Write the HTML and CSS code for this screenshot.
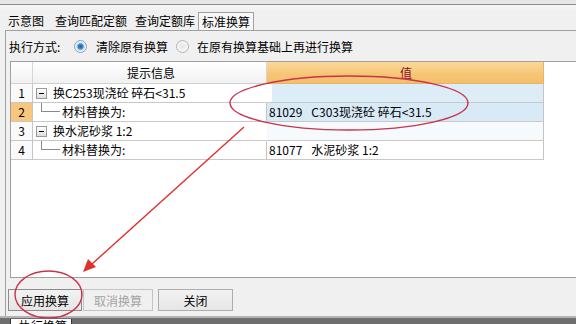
FILE: index.html
```html
<!DOCTYPE html>
<html lang="zh-CN">
<head>
    <meta charset="utf-8" />
    <title>标准换算</title>
    <link rel="stylesheet" href="styles.css">
</head>
<body>
    <div class="top-strip"></div>

    <div class="tabs">
        <div class="tab tab-1">示意图</div>
        <div class="tab tab-2">查询匹配定额</div>
        <div class="tab tab-3">查询定额库</div>
        <div class="tab tab-active">标准换算</div>
    </div>

    <div class="panel">
        <div class="options">
            <span class="opt-label">执行方式:</span>
            <span class="radio radio-on"></span>
            <span class="radio-text">清除原有换算</span>
            <span class="radio"></span>
            <span class="radio-text">在原有换算基础上再进行换算</span>
        </div>

        <div class="grid">
            <div class="row head">
                <div class="cell num"></div>
                <div class="cell info">提示信息</div>
                <div class="cell value">值</div>
            </div>

            <div class="row group">
                <div class="cell num">1</div>
                <div class="cell info"><span class="toggle"></span>换C253现浇砼 碎石&lt;31.5</div>
                <div class="cell value"><div class="fill"></div></div>
            </div>

            <div class="row child selected">
                <div class="cell num">2</div>
                <div class="cell info"><span class="elbow"></span>材料替换为:</div>
                <div class="cell value"><span class="code">81029</span>C303现浇砼 碎石&lt;31.5</div>
            </div>

            <div class="row group group-light">
                <div class="cell num">3</div>
                <div class="cell info"><span class="toggle"></span>换水泥砂浆 1:2</div>
                <div class="cell value"></div>
            </div>

            <div class="row child">
                <div class="cell num">4</div>
                <div class="cell info"><span class="elbow"></span>材料替换为:</div>
                <div class="cell value"><span class="code">81077</span>水泥砂浆 1:2</div>
            </div>
        </div>

        <div class="actions">
            <button class="button button-default">应用换算</button>
            <button class="button button-off">取消换算</button>
            <button class="button button-close">关闭</button>
        </div>
    </div>

    <div class="bottom">
        <div class="bottom-tab">执行换算</div>
    </div>

    <!-- red notes drawn over the screenshot -->
    <svg class="marks" width="576" height="324" viewBox="0 0 576 324">
        <ellipse cx="349" cy="103" rx="119" ry="27" fill="none" stroke="#c9334c" stroke-width="1.4"/>
        <line x1="244" y1="127" x2="92" y2="264" stroke="#e0302c" stroke-width="1.4"/>
        <polygon points="83,272 88,259 96,267" fill="#e0302c"/>
        <ellipse cx="48.5" cy="294.5" rx="33.5" ry="23.5" fill="none" stroke="#c9334c" stroke-width="1.4"/>
    </svg>
</body>
</html>
```

FILE: styles.css
```css
* {
    box-sizing: border-box;
}

body {
    margin: 0;
    width: 576px;
    height: 324px;
    overflow: hidden;
    position: relative;
    background: #f0f0f0;
    color: #000;
    font-family: "Noto Sans CJK SC", "Noto Sans", sans-serif;
    font-size: 12px;
}

.top-strip {
    height: 5px;
    background: #e6e6e6;
    border-bottom: 1px solid #8d8d8d;
}

.tabs {
    display: flex;
    align-items: flex-end;
    height: 25px;
    padding-left: 8px;
    background: linear-gradient(#f6f6f6, #f0f0f0 6px);
}

.tab {
    height: 18px;
    line-height: 17px;
    white-space: nowrap;
}

.tab-1 { margin-right: 11px; }
.tab-2 { margin-right: 8px; }
.tab-3 { margin-right: 3px; }

.tab-active {
    padding: 0 3px;
    border: 1px solid #a0a0a0;
    border-bottom: 0;
    background: #f7f7f7;
}

.panel {
    margin-left: 5px;
    height: 286px;
    border-top: 1px solid #a0a0a0;
    border-left: 1px solid #a0a0a0;
}

.options {
    display: flex;
    align-items: center;
    height: 30px;
    padding-left: 3px;
    white-space: nowrap;
}

.opt-label {
    width: 65px;
}

.radio {
    width: 13px;
    height: 13px;
    border-radius: 50%;
    border: 1px solid #b4b4b4;
    background: radial-gradient(circle, #e4e4e4 0, #f4f4f4 60%, #ffffff 100%);
    margin-right: 8px;
    margin-left: 1px;
}

.radio-on {
    border-color: #8a9fb8;
    background: radial-gradient(circle, #1e5d9c 0, #3d86c9 30%, #a9cff0 45%, #f2f2f2 60%, #ffffff 100%);
    margin-left: 0;
    margin-right: 9px;
}

.radio-text {
    margin-right: 7px;
}

.grid {
    margin-left: 4px;
    height: 217px;
    border-top: 1px solid #a0a0a0;
    border-left: 1px solid #a0a0a0;
    border-bottom: 1px solid #a0a0a0;
    background: #fff;
}

.row {
    display: grid;
    grid-template-columns: 22px 234px 277px;
    height: 19px;
}

.cell {
    display: flex;
    align-items: center;
    border-right: 1px solid #c4c4c4;
    border-bottom: 1px solid #c8c8c8;
    white-space: nowrap;
    overflow: hidden;
    line-height: 18px;
}

.num {
    justify-content: center;
    background: #fafafa;
}

.head {
    height: 22px;
}

.head .cell {
    justify-content: center;
    background: linear-gradient(#ffffff, #f1f1f1);
    border-right-color: #d6d6d6;
    border-bottom-color: #d0d0d0;
}

.head .value {
    color: #8a1030;
    background: linear-gradient(#fbd89b, #f6c574 60%, #f3bf6c);
    border-right-color: #e7b56a;
    border-bottom-color: #e6b468;
}

.info {
    padding-left: 3px;
}

.value {
    padding-left: 2px;
}

.group .info {
    border-right-color: transparent;
}

.group .value {
    padding: 0 0 0 5px;
    align-items: stretch;
}

.fill {
    flex: 1;
    background: #dcedf8;
}

.group-light .value {
    background: #f6fafd;
}

.selected .num {
    background: #f6c77c;
}

.selected .value {
    background: #d9eaf7;
}

.toggle {
    position: relative;
    width: 11px;
    height: 11px;
    margin-right: 6px;
    border: 1px solid #9a9a9a;
    background: linear-gradient(#ffffff, #dedede);
}

.toggle::after {
    content: "";
    position: absolute;
    left: 2px;
    top: 4px;
    width: 5px;
    height: 1px;
    background: #000;
}

.child .info {
    padding-left: 8px;
    align-items: flex-start;
}

.elbow {
    width: 19px;
    height: 9px;
    margin-right: 2px;
    border-left: 1px solid #8a8a8a;
    border-bottom: 1px solid #8a8a8a;
}

.child .info {
    line-height: 18px;
}

.code {
    margin-right: 9px;
}

.actions {
    display: flex;
    padding: 11px 0 0 2px;
}

.button {
    height: 22px;
    padding: 0;
    margin: 0 1px 0 0;
    border: 1px solid #adadad;
    background: linear-gradient(#f2f2f2, #e6e6e6);
    font-family: "Noto Sans CJK SC", "Noto Sans", sans-serif;
    font-size: 12px;
    color: #000;
}

.button-default {
    width: 74px;
    border-color: #8c8c8c;
}

.button-off {
    width: 70px;
    margin-right: 5px;
    color: #a3a3a3;
    border-color: #c4c4c4;
    background: #f0f0f0;
}

.button-close {
    width: 75px;
}

.bottom {
    height: 8px;
    border-top: 2px solid #b4b4b4;
    background: #6e6e6e;
}

.bottom-tab {
    width: 62px;
    height: 5px;
    margin: 1px 0 0 10px;
    padding: 0 0 0 8px;
    background: #fff;
    border-left: 1px solid #333;
    border-right: 1px solid #333;
    overflow: hidden;
    line-height: 14px;
    white-space: nowrap;
}

.marks {
    position: absolute;
    left: 0;
    top: 0;
    pointer-events: none;
}
```
